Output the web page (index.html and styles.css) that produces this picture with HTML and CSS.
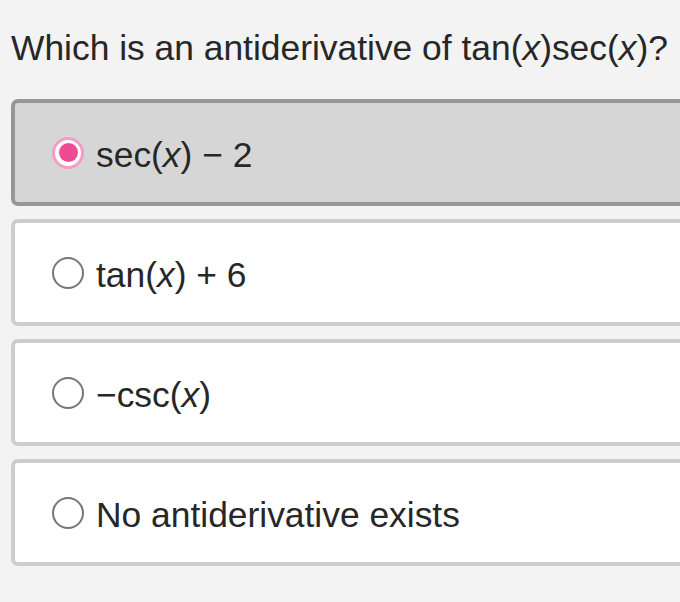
FILE: index.html
```html
<!DOCTYPE html>
<html>
<head>
<meta charset="utf-8">
<link rel="stylesheet" href="styles.css">
</head>
<body>
<div class="page">
  <h1 class="question">Which is an antiderivative of tan(<i>x</i>)sec(<i>x</i>)?</h1>
  <div class="options">
    <div class="option selected">
      <span class="radio"><span class="dot"></span></span>
      <span class="label">sec(<i>x</i>) − 2</span>
    </div>
    <div class="option">
      <span class="radio"></span>
      <span class="label">tan(<i>x</i>) + 6</span>
    </div>
    <div class="option">
      <span class="radio"></span>
      <span class="label">−csc(<i>x</i>)</span>
    </div>
    <div class="option">
      <span class="radio"></span>
      <span class="label">No antiderivative exists</span>
    </div>
  </div>
</div>
</body>
</html>
```
FILE: styles.css
```css
html, body {
  margin: 0;
  padding: 0;
  background: #f3f3f3;
  overflow: hidden;
}
.page {
  padding: 28px 0 0 11px;
  width: 720px;
  font-family: "Liberation Sans", Arial, sans-serif;
  color: #272727;
}
.question {
  margin: 0;
  font-size: 35.4px;
  font-weight: normal;
  line-height: 40px;
  white-space: nowrap;
}
.question i, .label i {
  font-style: italic;
}
.options {
  margin-top: 31px;
  display: flex;
  flex-direction: column;
  gap: 13px;
}
.option {
  box-sizing: border-box;
  height: 107px;
  border: 4px solid #cdcdcd;
  border-radius: 7px;
  background: #ffffff;
  display: flex;
  align-items: center;
  padding-left: 37px;
  gap: 12px;
}
.option.selected {
  background: #d6d6d6;
  border-color: #979797;
}
.radio {
  box-sizing: border-box;
  width: 32px;
  height: 32px;
  border-radius: 50%;
  border: 2.5px solid #767676;
  display: flex;
  align-items: center;
  justify-content: center;
  flex: none;
}
.selected .radio {
  border: 3px solid #f49cc4;
  background: #ffffff;
}
.dot {
  width: 19px;
  height: 19px;
  border-radius: 50%;
  background: #ee4b94;
}
.label {
  font-size: 35.4px;
  line-height: 40px;
  white-space: nowrap;
  position: relative;
  top: 2px;
}
```
